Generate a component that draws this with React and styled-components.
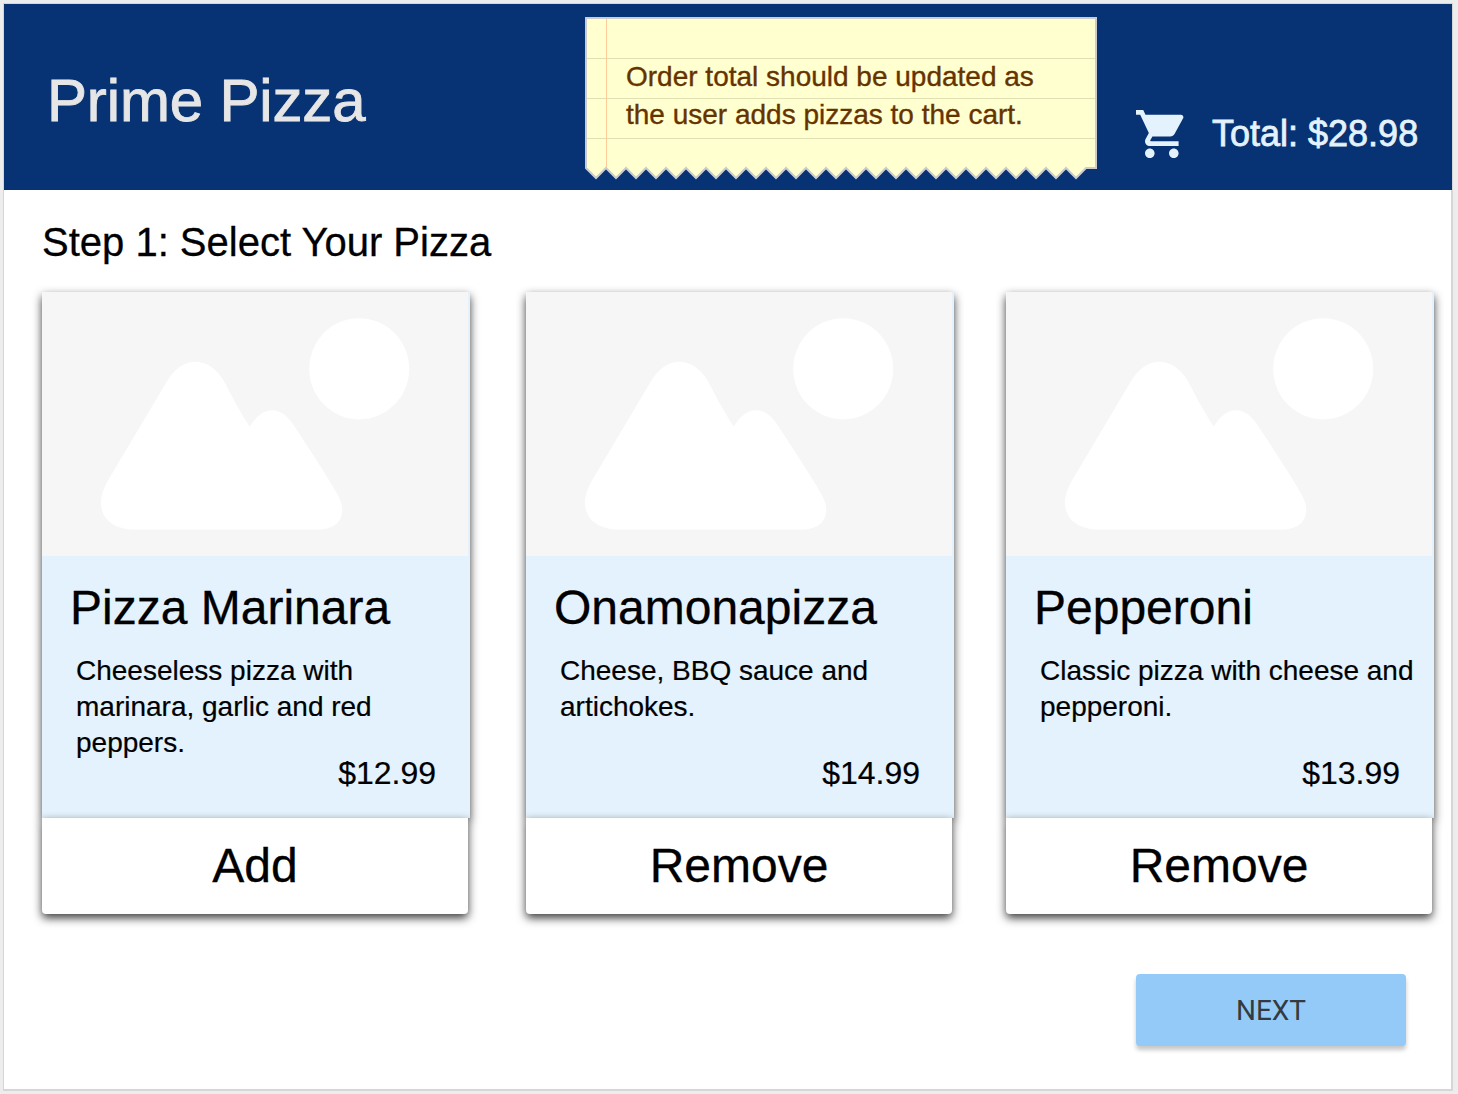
import React, { useState } from "react";
import styled, { createGlobalStyle } from "styled-components";

const GlobalStyle = createGlobalStyle`
  * { box-sizing: border-box; }
  body {
    margin: 0;
    background: #ededed;
    color: #000;
    font-family: "Liberation Sans", Arial, Helvetica, sans-serif;
  }
`;

const Page = styled.div`
  height: 1094px;
  padding: 3px 5px 3px 3px;
  overflow: hidden;
`;

const Frame = styled.div`
  height: 1088px;
  border: 1px solid #d6d6d6;
  border-width: 1px 2px 2px 1px;
  background: #fff;
`;

const Header = styled.header`
  display: flex;
  align-items: flex-start;
  width: 1448px;
  height: 186px;
  background: #073273;
`;

const Brand = styled.h1`
  flex: none;
  width: 581px;
  margin: 0;
  padding: 67px 0 0 43px;
  color: #e6e6e6;
  font-size: 60px;
  line-height: 60px;
  font-weight: 400;
  letter-spacing: -0.15px;
  -webkit-text-stroke: 0.9px #e6e6e6;
`;

const Note = styled.aside`
  position: relative;
  flex: none;
  width: 512px;
  height: 164px;
  margin-top: 13px;
`;

const Paper = styled.svg`
  position: absolute;
  inset: 0;
`;

const NoteText = styled.p`
  position: relative;
  margin: 0;
  padding: 41px 0 0 41px;
  color: #663300;
  font-size: 28px;
  line-height: 38px;
  white-space: pre-line;
  -webkit-text-stroke: 0.35px #663300;
`;

const Cart = styled.div`
  display: flex;
  align-items: center;
  gap: 22px;
  margin: 100px 0 0 39px;
  color: #e3f2fd;
`;

const Total = styled.span`
  font-size: 36px;
  line-height: 60px;
  white-space: nowrap;
  -webkit-text-stroke: 0.8px #e3f2fd;
`;

const Main = styled.main`
  display: flex;
  flex-direction: column;
  padding: 29px 0 0 38px;
`;

const StepTitle = styled.h2`
  margin: 0;
  font-size: 40px;
  line-height: 46px;
  font-weight: 400;
  -webkit-text-stroke: 0.3px #000;
`;

const Cards = styled.section`
  display: grid;
  grid-template-columns: 484px 480px 428px;
  margin-top: 27px;
`;

const Card = styled.article`
  width: 428px;
`;

const CardBody = styled.div`
  height: 526px;
  border-radius: 2px 2px 0 0;
  background: #e3f2fd;
  box-shadow: 0 4px 10px rgba(0, 0, 0, 0.77);
`;

const Photo = styled.svg`
  display: block;
  width: 426px;
  height: 264px;
  background: #f6f6f6;
`;

const Info = styled.div`
  display: flex;
  flex-direction: column;
  padding: 24px 0 0 28px;
`;

const Name = styled.h3`
  margin: 0;
  font-size: 48px;
  line-height: 56px;
  font-weight: 400;
  -webkit-text-stroke: 0.3px #000;
`;

const Description = styled.p`
  height: 102px;
  margin: 17px 0 0 6px;
  font-size: 28px;
  line-height: 36px;
  white-space: pre-line;
  -webkit-text-stroke: 0.2px #000;
`;

const Price = styled.span`
  align-self: flex-end;
  margin-right: 34px;
  font-size: 32px;
  line-height: 37px;
  -webkit-text-stroke: 0.2px #000;
`;

const Action = styled.button`
  position: relative;
  display: block;
  width: 426px;
  height: 96px;
  padding: 0 0 2px;
  border: 0;
  border-radius: 0 0 4px 4px;
  background: #fff;
  box-shadow: 0 4px 10px rgba(0, 0, 0, 0.77);
  color: #000;
  font: 48px "Liberation Sans", Arial, sans-serif;
  -webkit-text-stroke: 0.3px #000;
`;

const Next = styled.button`
  align-self: flex-end;
  width: 270px;
  height: 72px;
  margin: 60px 45px 0 0;
  padding: 0;
  border: 0;
  border-radius: 4px;
  background: #93caf8;
  box-shadow: 0 4px 4px rgba(0, 0, 0, 0.22);
  color: #333a40;
  font: 28px Roboto, sans-serif;
`;

const teeth = Array.from({ length: 25 }, (_, i) => `L${11 + i * 20} 161 L${21 + i * 20} 151`).join(" ");

function NotePaper() {
  return (
    <Paper width="512" height="164" viewBox="0 0 512 164">
      <path d={`M1 1 V151 ${teeth} H511 V1 Z`} fill="#ffffcf" />
      <path d="M1 41.5 H511 M1 81.5 H511 M1 121.5 H511" stroke="#e0e0b5" />
      <path d="M21.5 1 V151" stroke="#ffcc99" />
      <path d={`M1 1 V151 ${teeth} H511 V1 Z`} fill="none" stroke="#cccccc" strokeWidth="2" />
    </Paper>
  );
}

function CartIcon() {
  return (
    <svg width="54" height="60" viewBox="0 0 54 60" fill="none">
      <g transform="translate(-3 1.2) scale(2.4)" fill="currentColor">
        <path d="M7 18c-1.1 0-1.99.9-1.99 2S5.9 22 7 22s2-.9 2-2-.9-2-2-2zM1 2v2h2l3.6 7.59-1.35 2.45c-.16.28-.25.61-.25.96 0 1.1.9 2 2 2h12v-2H7.42c-.14 0-.25-.11-.25-.25l.03-.12.9-1.63h7.45c.75 0 1.41-.41 1.75-1.03l3.58-6.49c.08-.14.12-.31.12-.48 0-.55-.45-1-1-1H5.21l-.94-2H1zm16 16c-1.1 0-1.99.9-1.99 2s.89 2 1.99 2 2-.9 2-2-.9-2-2-2z" />
      </g>
    </svg>
  );
}

function PhotoPlaceholder() {
  return (
    <Photo viewBox="0 0 426 264">
      <path
        fill="#fff"
        d="M66.3 188 L124.7 89.7 C140 63.5 166 63.5 181.3 88 C189 102.500 198.500 121 207.700 134.500 C221 113 239 113 252 133.700 C266 155 282 179 294 199.700 C308.500 223 296 237.600 276.300 237.600 H93 C64 237.600 49 217 66.3 188 Z"
      />
      <ellipse cx="317.200" cy="76.800" rx="50" ry="50.600" fill="#fff" />
    </Photo>
  );
}

const pizzas = [
  { name: "Pizza Marinara", text: "Cheeseless pizza with\nmarinara, garlic and red\npeppers.", price: 12.99, inCart: false },
  { name: "Onamonapizza", text: "Cheese, BBQ sauce and\nartichokes.", price: 14.99, inCart: true },
  { name: "Pepperoni", text: "Classic pizza with cheese and\npepperoni.", price: 13.99, inCart: true },
];

export default function App() {
  const [items, setItems] = useState(pizzas);
  const total = items.reduce((sum, item) => sum + (item.inCart ? item.price : 0), 0);
  const toggle = (name) =>
    setItems((list) => list.map((item) => (item.name === name ? { ...item, inCart: !item.inCart } : item)));

  return (
    <Page>
      <GlobalStyle />
      <Frame>
        <Header>
          <Brand>Prime Pizza</Brand>
          <Note>
            <NotePaper />
            <NoteText>{"Order total should be updated as\nthe user adds pizzas to the cart."}</NoteText>
          </Note>
          <Cart>
            <CartIcon />
            <Total>{`Total: $${total.toFixed(2)}`}</Total>
          </Cart>
        </Header>
        <Main>
          <StepTitle>Step 1: Select Your Pizza</StepTitle>
          <Cards>
            {items.map((item) => (
              <Card key={item.name}>
                <CardBody>
                  <PhotoPlaceholder />
                  <Info>
                    <Name>{item.name}</Name>
                    <Description>{item.text}</Description>
                    <Price>{`$${item.price.toFixed(2)}`}</Price>
                  </Info>
                </CardBody>
                <Action type="button" onClick={() => toggle(item.name)}>
                  {item.inCart ? "Remove" : "Add"}
                </Action>
              </Card>
            ))}
          </Cards>
          <Next type="button">NEXT</Next>
        </Main>
      </Frame>
    </Page>
  );
}
